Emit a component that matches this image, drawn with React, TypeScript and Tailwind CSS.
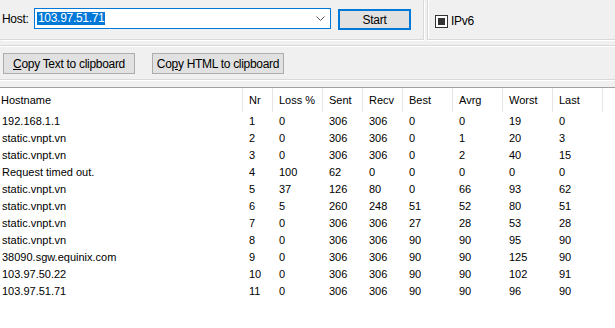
import React from "react";

const rows: string[][] = [
  ["192.168.1.1", "1", "0", "306", "306", "0", "0", "19", "0"],
  ["static.vnpt.vn", "2", "0", "306", "306", "0", "1", "20", "3"],
  ["static.vnpt.vn", "3", "0", "306", "306", "0", "2", "40", "15"],
  ["Request timed out.", "4", "100", "62", "0", "0", "0", "0", "0"],
  ["static.vnpt.vn", "5", "37", "126", "80", "0", "66", "93", "62"],
  ["static.vnpt.vn", "6", "5", "260", "248", "51", "52", "80", "51"],
  ["static.vnpt.vn", "7", "0", "306", "306", "27", "28", "53", "28"],
  ["static.vnpt.vn", "8", "0", "306", "306", "90", "90", "95", "90"],
  ["38090.sgw.equinix.com", "9", "0", "306", "306", "90", "90", "125", "90"],
  ["103.97.50.22", "10", "0", "306", "306", "90", "90", "102", "91"],
  ["103.97.51.71", "11", "0", "306", "306", "90", "90", "96", "90"],
];

const headers = ["Hostname", "Nr", "Loss %", "Sent", "Recv", "Best", "Avrg", "Worst", "Last"];

const gridCols = "grid grid-cols-[243px_30px_50px_40px_40px_50px_50px_50px_50px]";

export default function App() {
  return (
    <div
      className="w-[615px] h-[328px] bg-[#f0f0f0] flex flex-col overflow-hidden text-black"
      style={{ fontFamily: '"Liberation Sans", Arial, sans-serif' }}
    >
      {/* top row */}
      <div className="h-[40px] flex shrink-0">
        <div className="w-[424px] h-[40px] border-r border-b border-[#d9d9d9] shadow-[1px_1px_0_#ffffff] flex items-start text-[12px] tracking-[-0.3px]">
          <span className="ml-[2px] w-[32px] mt-[12px] leading-[14px]">Host:</span>
          <div className="w-[297px] mt-[8px] h-[21px] border border-[#0078d7] bg-white flex items-center pl-[2px] pr-[4px]">
            <span className="bg-[#0078d7] text-white h-[13px] leading-[13px] px-[1px]">103.97.51.71</span>
            <div className="flex-1" />
            <svg width="9" height="6" viewBox="0 0 9 6" className="mr-[1px]">
              <polyline points="0.5,0.5 4.5,4.5 8.5,0.5" fill="none" stroke="#555" strokeWidth="1" />
            </svg>
          </div>
          <div className="ml-[7px] mt-[9px] w-[73px] h-[21px] border-2 border-[#0078d7] bg-[#e1e1e1] flex items-center justify-center leading-[14px]">
            Start
          </div>
        </div>
        <div className="ml-[3px] flex-1 h-[40px] border-l border-b border-[#d9d9d9] shadow-[inset_1px_0_0_#ffffff,0_1px_0_#ffffff] flex items-start text-[12px] tracking-[-0.3px]">
          <div className="ml-[7px] mt-[15px] w-[13px] h-[13px] border border-[#333333] bg-white flex items-center justify-center">
            <div className="w-[7px] h-[7px] bg-[#333333]" />
          </div>
          <span className="ml-[3px] mt-[14px] leading-[14px]">IPv6</span>
        </div>
      </div>

      <div className="h-[5px] shrink-0" />

      {/* button group */}
      <div className="h-[35px] shrink-0 border-t border-b border-[#d9d9d9] shadow-[inset_0_1px_0_#ffffff,0_1px_0_#ffffff] flex items-start text-[12px] tracking-[-0.3px]">
        <div className="ml-[3px] mt-[7px] w-[132px] h-[21px] border border-[#adadad] bg-[#e1e1e1] flex items-center justify-center leading-[14px]">
          <span><span className="underline">C</span>opy Text to clipboard</span>
        </div>
        <div className="ml-[17px] mt-[7px] w-[132px] h-[21px] border border-[#adadad] bg-[#e1e1e1] flex items-center justify-center leading-[14px]">
          <span>Co<span className="underline">p</span>y HTML to clipboard</span>
        </div>
      </div>

      <div className="h-[7px] shrink-0" />

      {/* table */}
      <div className="flex-1 bg-white border-t border-[#a0a0a0] text-[11px]">
        <div className={`${gridCols} h-[24px]`}>
          {headers.map((h, i) => (
            <div
              key={h}
              className={`h-[24px] border-r border-[#e5e5e5] flex items-center leading-[13px] ${i === 0 ? "pl-[1px]" : "pl-[6px]"}`}
            >
              {h}
            </div>
          ))}
        </div>
        {rows.map((r, ri) => (
          <div key={ri} className={`${gridCols} h-[17px]`}>
            {r.map((c, ci) => (
              <div
                key={ci}
                className={`h-[17px] pt-px flex items-center leading-[13px] whitespace-nowrap ${ci === 0 ? "pl-[2px]" : "pl-[6px]"}`}
              >
                {c}
              </div>
            ))}
          </div>
        ))}
      </div>
    </div>
  );
}
